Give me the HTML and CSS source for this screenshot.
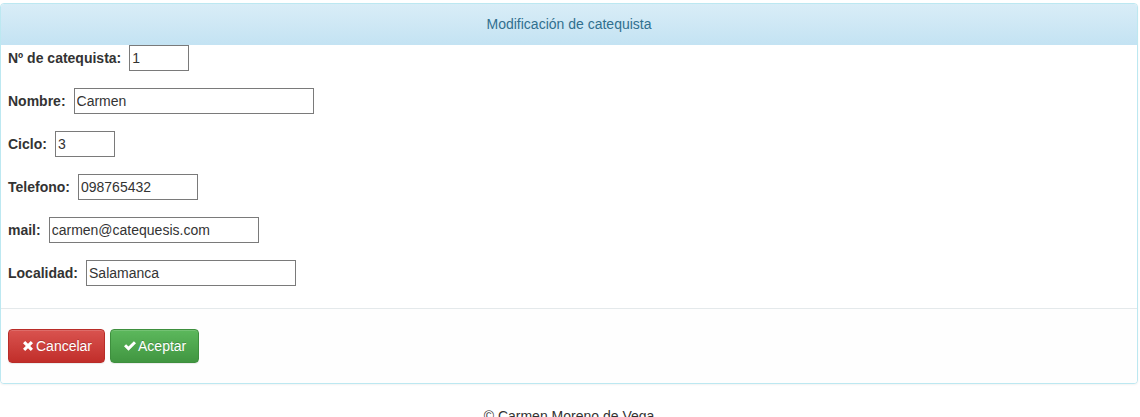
FILE: index.html
```html
<!DOCTYPE html>
<html lang="es">
<head>
<meta charset="utf-8">
<title>Modificación de catequista</title>
<link rel="stylesheet" href="styles.css">
</head>
<body>
<div class="page">
  <form class="panel">
    <div class="panel-heading">Modificación de catequista</div>
    <div class="panel-body">
      <div class="row"><label>Nº de catequista:</label><input class="w60" type="text" value="1"></div>
      <div class="row"><label>Nombre:</label><input class="w240" type="text" value="Carmen"></div>
      <div class="row"><label>Ciclo:</label><input class="w60" type="text" value="3"></div>
      <div class="row"><label>Telefono:</label><input class="w120" type="text" value="098765432"></div>
      <div class="row"><label>mail:</label><input class="w210" type="text" value="carmen@catequesis.com"></div>
      <div class="row"><label>Localidad:</label><input class="w210" type="text" value="Salamanca"></div>
    </div>
    <div class="panel-footer">
      <button type="button" class="btn btn-danger"><svg class="ico" viewBox="0 0 12 12" width="12" height="12"><path d="M1 3.2 3.2 1 6 3.8 8.8 1 11 3.2 8.2 6 11 8.8 8.8 11 6 8.2 3.2 11 1 8.8 3.8 6Z" fill="#fff"/></svg>Cancelar</button>
      <button type="button" class="btn btn-success"><svg class="ico" viewBox="0 0 13 12" width="13" height="12"><path d="M0.5 6.3 2.6 4.2 5 6.6 10.4 1.2 12.5 3.3 5 10.8Z" fill="#fff"/></svg>Aceptar</button>
    </div>
  </form>
  <footer class="site-footer">© Carmen Moreno de Vega</footer>
</div>
</body>
</html>
```
FILE: styles.css
```css
html, body {
  margin: 0;
  padding: 0;
  background: #fff;
}
body {
  font-family: "Liberation Sans", Arial, sans-serif;
  font-size: 14px;
  line-height: 20px;
  color: #333;
}
.page {
  padding: 3px 2px 0 0;
}
.panel {
  margin: 0 0 20px 0;
  border: 1px solid #bce8f1;
  border-radius: 4px;
  background: #fff;
  box-shadow: 0 1px 2px rgba(0, 0, 0, 0.05);
  overflow: hidden;
}
.panel-heading {
  padding: 10px 15px;
  text-align: center;
  color: #31708f;
  background: linear-gradient(to bottom, #d9edf7 0%, #c4e3f3 100%);
  border-bottom: 1px solid #c4e3f3;
  height: 20px;
}
.panel-body {
  padding: 0 7px 22px 7px;
  display: flex;
  flex-direction: column;
  gap: 17px;
}
.row {
  display: flex;
  align-items: center;
  height: 26px;
}
.row label {
  font-weight: bold;
  margin-right: 8px;
}
.row input {
  box-sizing: border-box;
  height: 26px;
  margin: 0;
  padding: 2px 2px;
  border: 1px solid #7a7a7a;
  border-radius: 0;
  font-family: "Liberation Sans", Arial, sans-serif;
  font-size: 14px;
  line-height: 20px;
  color: #333;
  background: #fff;
}
.w60 { width: 60px; }
.w120 { width: 120px; }
.w210 { width: 210px; }
.w240 { width: 240px; }
.panel-footer {
  padding: 20px 7px 20px 7px;
  border-top: 1px solid #e4e9eb;
  background: #fefefe;
  display: flex;
  gap: 5px;
}
.btn {
  display: inline-flex;
  align-items: center;
  height: 34px;
  padding: 6px 12px;
  box-sizing: border-box;
  border-radius: 4px;
  font-family: "Liberation Sans", Arial, sans-serif;
  font-size: 14px;
  line-height: 20px;
  color: #fff;
  text-shadow: 0 -1px 0 rgba(0, 0, 0, 0.2);
  box-shadow: inset 0 1px 0 rgba(255, 255, 255, 0.15), 0 1px 1px rgba(0, 0, 0, 0.075);
  cursor: pointer;
}
.ico {
  width: 14px;
  display: block;
  flex: none;
  margin-right: 1px;
}
.btn-danger {
  background: linear-gradient(to bottom, #d9534f 0%, #c12e2a 100%);
  border: 1px solid #b92c28;
}
.btn-success {
  background: linear-gradient(to bottom, #5cb85c 0%, #419641 100%);
  border: 1px solid #3e8f3e;
}
.site-footer {
  text-align: center;
  padding-top: 2px;
}
```
